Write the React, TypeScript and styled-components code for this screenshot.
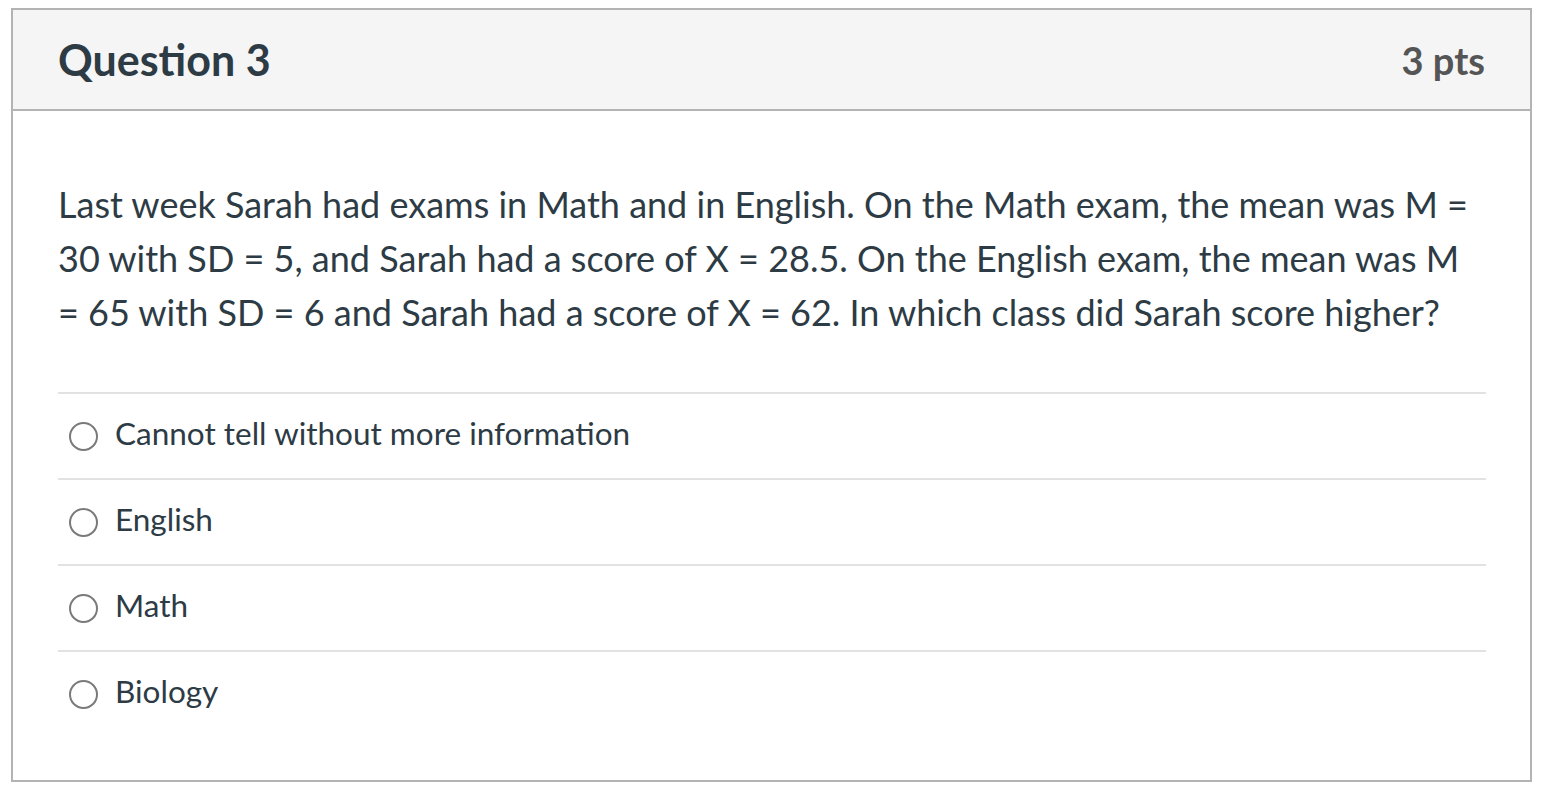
import styled, { createGlobalStyle } from 'styled-components';

const GlobalStyle = createGlobalStyle`
    body {
        margin: 0;
        background: #fff;
        font-family: Lato, "Liberation Sans", sans-serif;
    }
`;

const answers = [
    'Cannot tell without more information',
    'English',
    'Math',
    'Biology',
];

function App() {
    return (
        <>
            <GlobalStyle />
            <Page>
                <Card>
                    <Header>
                        <Title>Question 3</Title>
                        <Points>3 pts</Points>
                    </Header>
                    <Body>
                        <QuestionText>
                            Last week Sarah had exams in Math and in English. On the Math exam, the mean was M =
                            30 with SD = 5, and Sarah had a score of X = 28.5. On the English exam, the mean was M
                            = 65 with SD = 6 and Sarah had a score of X = 62. In which class did Sarah score higher?
                        </QuestionText>
                        <Answers>
                            {answers.map((answer, index) => (
                                <Answer key={index}>
                                    <Radio />
                                    <AnswerLabel>{answer}</AnswerLabel>
                                </Answer>
                            ))}
                        </Answers>
                    </Body>
                </Card>
            </Page>
        </>
    );
}

export default App;

const Page = styled.div`
    padding: 8px 19px 16px 11px;
`;

const Card = styled.div`
    border: 2px solid #b3b3b3;
    background: #fff;
    width: 1521px;
    box-sizing: border-box;
`;

const Header = styled.div`
    display: flex;
    justify-content: space-between;
    align-items: center;
    height: 99px;
    padding: 0 45px;
    background: #f5f5f5;
    border-bottom: 2px solid #b3b3b3;
`;

const Title = styled.h2`
    margin: 0;
    font-size: 43px;
    font-weight: 700;
    color: #2d3b45;
`;

const Points = styled.div`
    font-size: 38px;
    font-weight: 700;
    color: #555;
`;

const Body = styled.div`
    padding: 66px 44px 44px 45px;
`;

const QuestionText = styled.p`
    margin: 0 0 53px;
    font-size: 36px;
    line-height: 54px;
    color: #2d3b45;
`;

const Answers = styled.ul`
    margin: 0;
    padding: 0;
    list-style: none;
`;

const Answer = styled.li`
    display: flex;
    align-items: center;
    gap: 17px;
    height: 84px;
    padding-left: 11px;
    border-top: 2px solid #e2e2e2;
    font-size: 31.5px;
    color: #2d3b45;
`;

const AnswerLabel = styled.span`
    position: relative;
    top: -3px;
`;

const Radio = styled.span`
    width: 25px;
    height: 25px;
    border: 2px solid #7a7a7a;
    border-radius: 50%;
    flex-shrink: 0;
`;
